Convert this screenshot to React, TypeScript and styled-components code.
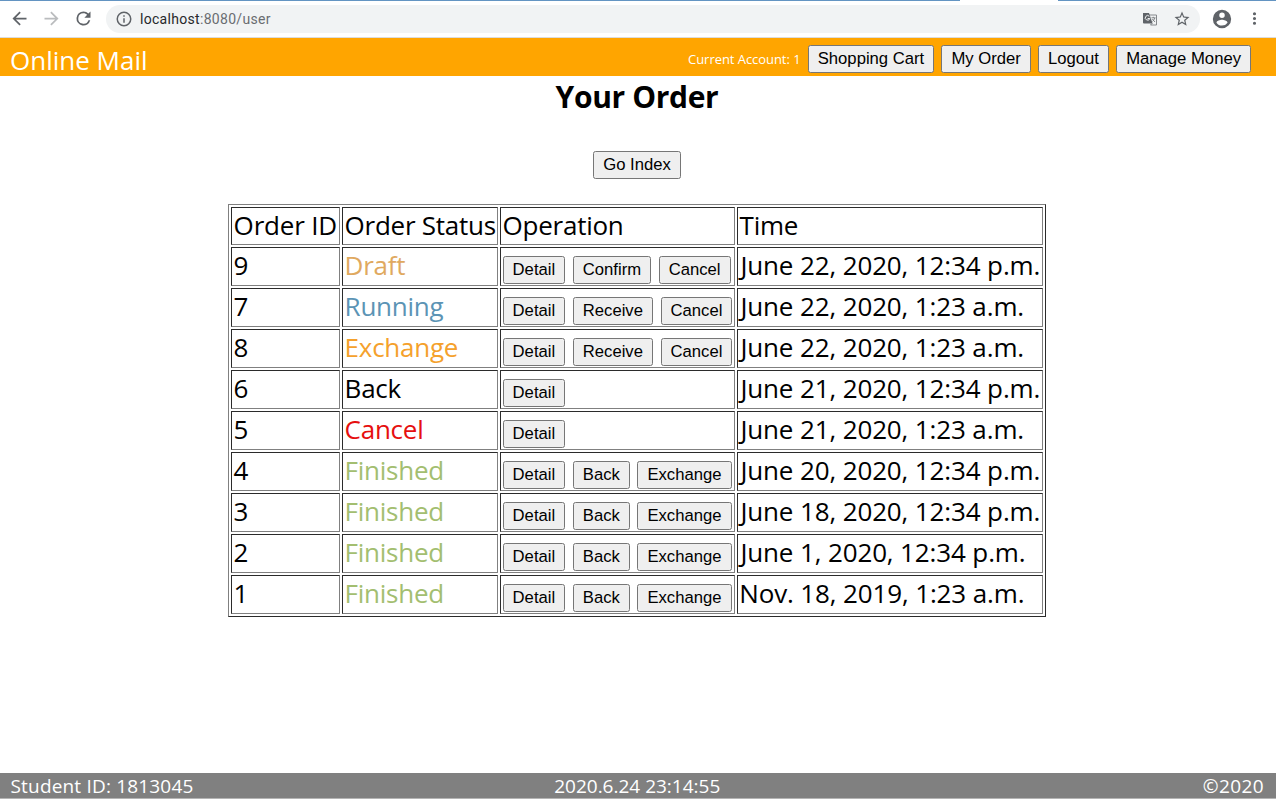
import React from "react";
import styled, { createGlobalStyle } from "styled-components";

const GlobalStyle = createGlobalStyle`
  *, *::before, *::after { box-sizing: border-box; }
  body { margin: 0; background: #fff; color: #000; font-family: "Open Sans", "Noto Sans", sans-serif; }
`;

const Page = styled.div`
  display: flex;
  flex-direction: column;
  height: 799px;
  overflow: hidden;
`;

const TabEdge = styled.div`
  display: flex;
  justify-content: space-between;
  height: 1px;
  background: #fff;
`;
const Strip = styled.div<{ $w: number }>`
  width: ${(p) => p.$w}px;
  background: #6394c2;
`;

const BrowserBar = styled.div`
  display: flex;
  align-items: center;
  height: 37px;
  padding: 0 12px 1px 9px;
  border-bottom: 1px solid #dcdcdc;
  color: #5f6368;
  svg { display: block; flex: none; }
`;
const NavIcons = styled.div`
  display: flex;
  gap: 11px;
  width: 97px;
`;
const AddressBox = styled.div`
  display: flex;
  align-items: center;
  width: 1094px;
  height: 28px;
  padding: 0 9px 0 9px;
  border-radius: 14px;
  background: #f1f3f4;
`;
const Url = styled.div`
  flex: 1;
  margin-left: 7px;
  font: 14px/20px Roboto, sans-serif;
  letter-spacing: 0.3px;
  color: #6a6d71;
  b { font-weight: 400; color: #27292c; }
`;
const BoxIcons = styled.div`
  display: flex;
  align-items: center;
  gap: 14px;
`;
const MenuIcons = styled.div`
  display: flex;
  align-items: center;
  gap: 12px;
  margin-left: 11px;
`;

const SiteHeader = styled.header`
  display: flex;
  justify-content: space-between;
  height: 38px;
  padding: 0 25px 0 10px;
  background: #ffa500;
  color: #fff;
`;
const Brand = styled.div`
  font-size: 26px;
  line-height: 44px;
`;
const HeaderActions = styled.div`
  display: flex;
  gap: 7.2px;
  padding-top: 7px;
`;
const Account = styled.span`
  font-size: 13px;
  line-height: 28px;
  letter-spacing: -0.05px;
  white-space: nowrap;
`;

const Button = styled.button`
  flex: none;
  height: 28px;
  padding: 0 9px;
  border: 1px solid #767676;
  border-radius: 2.5px;
  background: #efefef;
  color: #000;
  font: 16.667px/24px "Liberation Sans", Arial, sans-serif;
  white-space: nowrap;
`;
const IndexButton = styled(Button)`
  width: 88px;
`;

const Main = styled.main`
  display: flex;
  flex: 1;
  flex-direction: column;
  align-items: center;
  padding-right: 2px;
`;
const Title = styled.h1`
  height: 42px;
  margin: 0 0 33px;
  font-size: 30px;
  line-height: 41px;
  letter-spacing: -0.35px;
  font-weight: 700;
`;

const Table = styled.table`
  width: 818px;
  margin-top: 25px;
  table-layout: fixed;
  border: 1px solid;
  border-color: #808080 #2b2b2b #2b2b2b #808080;
  border-spacing: 2px;
`;
const Cell = styled.td<{ $tone?: string; $track?: number; $inset?: number }>`
  height: 39px;
  padding: 0 1px 2px ${(p) => p.$inset ?? 1.6}px;
  border: 1px solid;
  border-color: #2b2b2b #808080 #808080 #2b2b2b;
  color: ${(p) => p.$tone ?? "#000"};
  font-size: 26px;
  line-height: 35px;
  letter-spacing: ${(p) => p.$track ?? -0.25}px;
  white-space: nowrap;
`;
const HeadCell = styled(Cell)`
  height: 38px;
  padding-bottom: 1px;
`;
const Operations = styled.div`
  display: flex;
  gap: 7.6px;
  height: 35px;
  padding-top: 8px;
  letter-spacing: 0;
`;

const SiteFooter = styled.footer`
  display: grid;
  grid-template-columns: 1fr auto 1fr;
  height: 26px;
  padding: 0 12px 0 10.5px;
  border-bottom: 1px solid #b4b4b4;
  background: #808080;
  color: #fff;
  font-size: 19px;
  line-height: 26px;
  font-weight: 500;
`;
const FooterText = styled.span<{ $align?: string; $track?: number }>`
  text-align: ${(p) => p.$align ?? "left"};
  letter-spacing: ${(p) => p.$track ?? 0}px;
`;

const Material = ({ d, size = 18, color }: { d: string; size?: number; color?: string }) => (
  <svg width={size} height={size} viewBox="0 0 24 24" fill={color ?? "currentColor"}>
    <path d={d} />
  </svg>
);

const ICON = {
  back: "M20 11H7.83l5.59-5.59L12 4l-8 8 8 8 1.41-1.41L7.83 13H20v-2z",
  forward: "M12 4l-1.41 1.41L16.17 11H4v2h12.17l-5.58 5.59L12 20l8-8z",
  reload:
    "M17.65 6.35A7.96 7.96 0 0 0 12 4a8 8 0 1 0 7.73 10h-2.08A6 6 0 1 1 12 6c1.66 0 3.14.69 4.22 1.78L13 11h7V4l-2.35 2.35z",
  info: "M11 7h2v2h-2zm0 4h2v6h-2zm1-9a10 10 0 1 0 0 20 10 10 0 0 0 0-20zm0 18a8 8 0 1 1 0-16 8 8 0 0 1 0 16z",
  star: "M22 9.24l-7.19-.62L12 2 9.19 8.63 2 9.24l5.46 4.73L5.82 21 12 17.27 18.18 21l-1.63-7.03L22 9.24zM12 15.4l-3.76 2.27 1-4.28-3.32-2.88 4.38-.38L12 6.1l1.71 4.04 4.38.38-3.32 2.88 1 4.28L12 15.4z",
  person:
    "M12 2a10 10 0 1 0 0 20 10 10 0 0 0 0-20zm0 3a3 3 0 1 1 0 6 3 3 0 0 1 0-6zm0 14.2a7.2 7.2 0 0 1-6-3.22c.03-1.99 4-3.08 6-3.08 1.99 0 5.97 1.09 6 3.08a7.2 7.2 0 0 1-6 3.22z",
  more: "M12 8a2 2 0 1 0 0-4 2 2 0 0 0 0 4zm0 2a2 2 0 1 0 0 4 2 2 0 0 0 0-4zm0 6a2 2 0 1 0 0 4 2 2 0 0 0 0-4z",
};

const TranslateIcon = () => (
  <svg width="18" height="18" viewBox="0 0 18 18" fill="none">
    <path d="M7 5h8.5v10H9.5" stroke="#85888c" />
    <path d="M2 3h6l3.6 10.4H2.6L2 12.8z" fill="#5f6368" />
    <path d="M8.3 6.3A2.3 2.3 0 1 0 8.8 8.5H6.6" stroke="#f1f3f4" strokeWidth="1" />
    <path d="M10.5 7.8h4M12.3 6.8v1M13.8 8c-.4 1.5-1.5 2.8-2.3 3.5M11.3 9l2.7 3M9.5 15l1.7-1.7" stroke="#777a7e" strokeWidth=".9" />
  </svg>
);

type Order = { id: number; status: string; actions: string[]; time: string };

const ORDERS: Order[] = [
  { id: 9, status: "Draft", actions: ["Detail", "Confirm", "Cancel"], time: "June 22, 2020, 12:34 p.m." },
  { id: 7, status: "Running", actions: ["Detail", "Receive", "Cancel"], time: "June 22, 2020, 1:23 a.m." },
  { id: 8, status: "Exchange", actions: ["Detail", "Receive", "Cancel"], time: "June 22, 2020, 1:23 a.m." },
  { id: 6, status: "Back", actions: ["Detail"], time: "June 21, 2020, 12:34 p.m." },
  { id: 5, status: "Cancel", actions: ["Detail"], time: "June 21, 2020, 1:23 a.m." },
  { id: 4, status: "Finished", actions: ["Detail", "Back", "Exchange"], time: "June 20, 2020, 12:34 p.m." },
  { id: 3, status: "Finished", actions: ["Detail", "Back", "Exchange"], time: "June 18, 2020, 12:34 p.m." },
  { id: 2, status: "Finished", actions: ["Detail", "Back", "Exchange"], time: "June 1, 2020, 12:34 p.m." },
  { id: 1, status: "Finished", actions: ["Detail", "Back", "Exchange"], time: "Nov. 18, 2019, 1:23 a.m." },
];

const STATUS_TONE: Record<string, string> = {
  Draft: "#e0a95f",
  Running: "#5c94b5",
  Exchange: "#f5a12c",
  Back: "#000",
  Cancel: "#e60f0f",
  Finished: "#a3be70",
};

const Column = styled.col<{ $w: number }>`
  width: ${(p) => p.$w}px;
`;

export default function App() {
  return (
    <Page>
      <GlobalStyle />
      <TabEdge>
        <Strip $w={960} />
        <Strip $w={218} />
      </TabEdge>
      <BrowserBar>
        <NavIcons>
          <Material d={ICON.back} size={21} />
          <Material d={ICON.forward} size={21} color="#babcbe" />
          <Material d={ICON.reload} size={21} />
        </NavIcons>
        <AddressBox>
          <Material d={ICON.info} />
          <Url>
            <b>localhost</b>:8080/user
          </Url>
          <BoxIcons>
            <TranslateIcon />
            <Material d={ICON.star} />
          </BoxIcons>
        </AddressBox>
        <MenuIcons>
          <Material d={ICON.person} size={22} />
          <Material d={ICON.more} size={19} />
        </MenuIcons>
      </BrowserBar>
      <SiteHeader>
        <Brand>Online Mail</Brand>
        <HeaderActions>
          <Account>Current Account: 1</Account>
          <Button>Shopping Cart</Button>
          <Button>My Order</Button>
          <Button>Logout</Button>
          <Button>Manage Money</Button>
        </HeaderActions>
      </SiteHeader>
      <Main>
        <Title>Your Order</Title>
        <IndexButton>Go Index</IndexButton>
        <Table>
          <colgroup>
            <Column $w={109} />
            <Column $w={156} />
            <Column $w={235} />
            <Column $w={306} />
          </colgroup>
          <tbody>
            <tr>
              <HeadCell $track={-0.18}>Order ID</HeadCell>
              <HeadCell>Order Status</HeadCell>
              <HeadCell>Operation</HeadCell>
              <HeadCell>Time</HeadCell>
            </tr>
            {ORDERS.map((o) => (
              <tr key={o.id}>
                <Cell>{o.id}</Cell>
                <Cell $tone={STATUS_TONE[o.status]}>{o.status}</Cell>
                <Cell>
                  <Operations>
                    {o.actions.map((a) => (
                      <Button key={a}>{a}</Button>
                    ))}
                  </Operations>
                </Cell>
                <Cell $track={-0.13} $inset={o.time.startsWith("J") ? 2.4 : 1.2}>
                  {o.time}
                </Cell>
              </tr>
            ))}
          </tbody>
        </Table>
      </Main>
      <SiteFooter>
        <FooterText $track={0.18}>Student ID: 1813045</FooterText>
        <FooterText>2020.6.24 23:14:55</FooterText>
        <FooterText $align="right" $track={0.4}>©2020</FooterText>
      </SiteFooter>
    </Page>
  );
}
